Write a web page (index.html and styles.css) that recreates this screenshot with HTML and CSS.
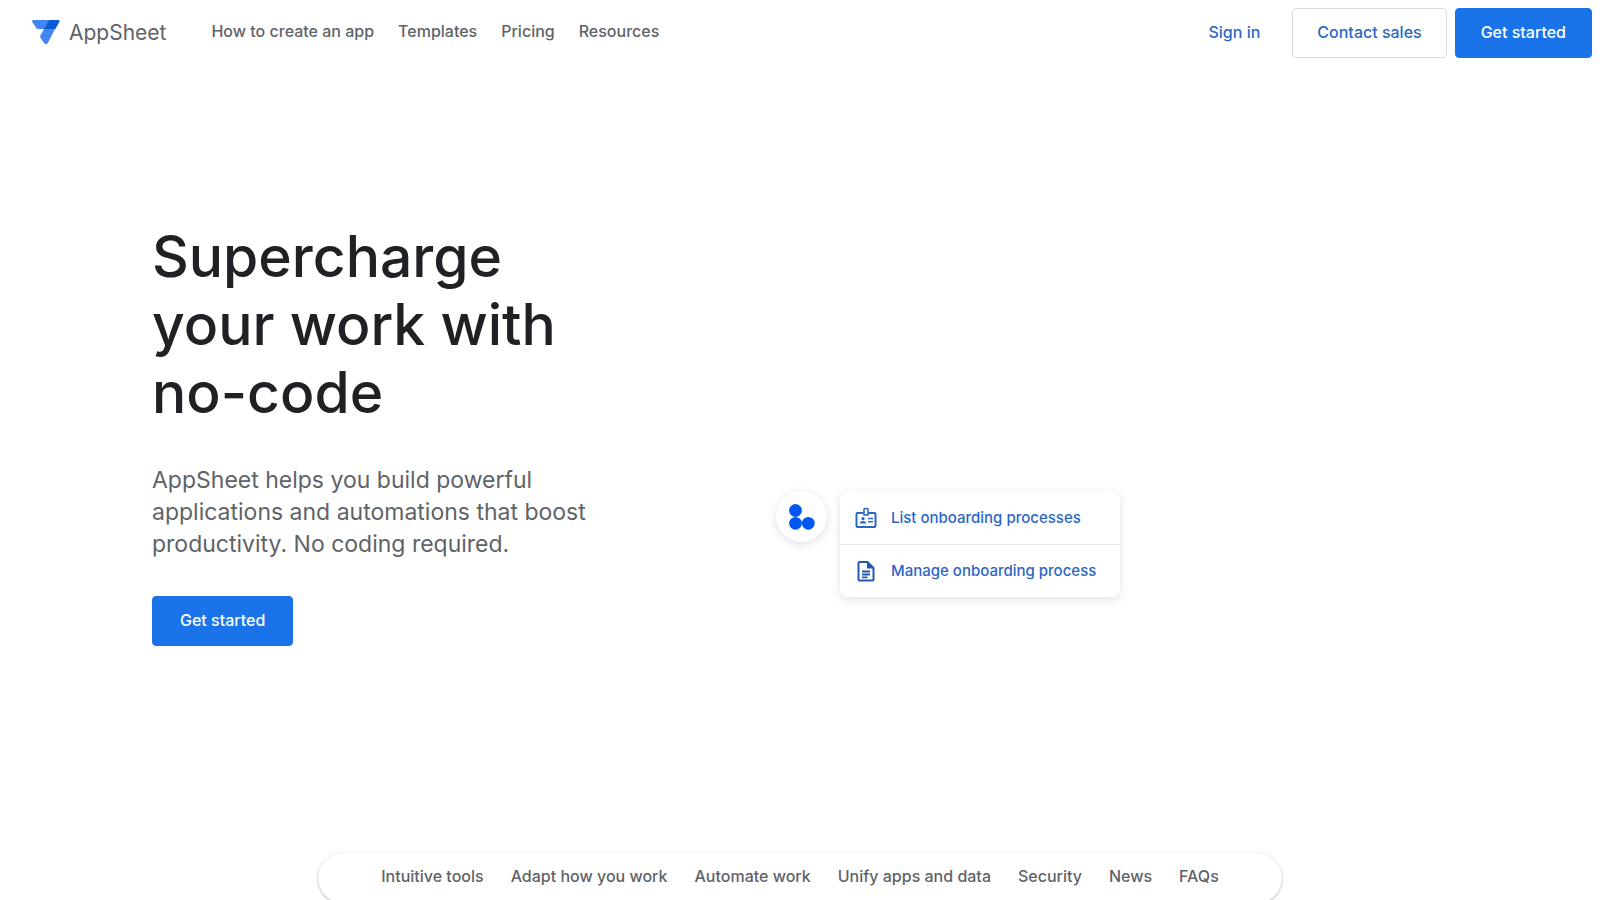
FILE: index.html
```html
<!DOCTYPE html>
<html lang="en">
<head>
<meta charset="utf-8">
<meta name="viewport" content="width=device-width, initial-scale=1">
<title>AppSheet</title>
<link rel="stylesheet" href="styles.css">
</head>
<body>
<div class="page">
<header class="header">
  <a class="brand" href="#">
    <svg class="brand-mark" viewBox="0 0 28 25" aria-hidden="true">
      <path fill="#4285f4" d="M1.500 0H26L23 9L15.700 23.200Q14 25.500 12.200 23.200L8.600 18Q7.800 16.700 8.500 15.300L12 9H6.200Q4.800 9 4 7.800L.3 2Q-.5.200 1.500 0Z"/>
      <path fill="#0b5cd0" d="M18.500 0H26.200Q28.300.200 27.300 2L23.400 9H12L16.500 1.200Q17.200 0 18.500 0Z"/>
    </svg>
    <span>AppSheet</span>
  </a>
  <nav class="nav" aria-label="Main">
    <a href="#">How to create an app</a>
    <a href="#">Templates</a>
    <a href="#">Pricing</a>
    <a href="#">Resources</a>
  </nav>
  <div class="actions">
    <a class="signin" href="#">Sign in</a>
    <button class="button button-outline" type="button">Contact sales</button>
    <button class="button" type="button">Get started</button>
  </div>
</header>
<main class="hero">
  <section class="intro">
    <h1 class="title">Supercharge<br>your work with<br>no-code</h1>
    <p class="lead">AppSheet helps you build powerful<br>applications and automations that boost<br>productivity. No coding required.</p>
    <button class="button button-hero" type="button">Get started</button>
  </section>
  <section class="demo" aria-label="App suggestions">
    <div class="avatar">
      <svg width="26" height="26" viewBox="0 0 26 26" fill="#0057f0" aria-hidden="true"><circle cx="6.500" cy="6.500" r="6.400"/><circle cx="6.500" cy="19.300" r="6.400"/><circle cx="19.300" cy="19.300" r="6.400"/></svg>
    </div>
    <ul class="card">
      <li class="card-row">
        <svg width="22" height="22" viewBox="0 0 22 22" fill="none" stroke="#2b67c5" stroke-width="2" aria-hidden="true">
          <path d="M8.500 6H2.500Q1.500 6 1.500 7V19Q1.500 20 2.500 20H19.500Q20.500 20 20.500 19V7Q20.500 6 19.500 6H13.500"/>
          <path stroke-width="1.600" d="M9 8V2.500Q9 1.500 10 1.500H12Q13 1.500 13 2.500V8Z"/>
          <path stroke-width="1.400" d="M13 11.500H18M13 14.700H18"/>
          <circle cx="8" cy="11.700" r="1.600" fill="#2b67c5" stroke="none"/>
          <path fill="#2b67c5" stroke="none" d="M4.700 16.500Q5 14 8 14T11.300 16.500Z"/>
        </svg>
        <span>List onboarding processes</span>
      </li>
      <li class="card-row">
        <svg width="22" height="22" viewBox="0 0 22 22" fill="none" stroke="#2459b0" stroke-width="2" aria-hidden="true">
          <path d="M12.500 2H4.500Q3.500 2 3.500 3V19.500Q3.500 20.500 4.500 20.500H17.500Q18.500 20.500 18.500 19.500V8Z"/>
          <path fill="#2459b0" stroke="none" d="M12 1.500V8.500H19Z"/>
          <path stroke-width="1.800" d="M7 11.500H15M7 14.500H15M7 17.300H12.500"/>
        </svg>
        <span>Manage onboarding process</span>
      </li>
    </ul>
  </section>
</main>
<nav class="jump" aria-label="Page sections">
  <a href="#">Intuitive tools</a>
  <a href="#">Adapt how you work</a>
  <a href="#">Automate work</a>
  <a href="#">Unify apps and data</a>
  <a href="#">Security</a>
  <a href="#">News</a>
  <a href="#">FAQs</a>
</nav>
</div>
</body>
</html>
```
FILE: styles.css
```css
* { box-sizing: border-box; }

body { margin: 0; }

.page {
  display: flex;
  flex-direction: column;
  min-height: 100vh;
  overflow: hidden;
  background: #fff;
  color: #5f6368;
  font-family: Inter, Roboto, sans-serif;
  font-size: 16px;
  line-height: 24px;
}

a { color: inherit; text-decoration: none; }

.header {
  display: flex;
  align-items: center;
  padding: 8px 8px 8px 32px;
}

.brand {
  display: flex;
  align-items: center;
  gap: 9px;
  padding-bottom: 1px;
  font-size: 21px;
}

.brand-mark { width: 28px; height: 25px; }

.nav {
  display: flex;
  gap: 24px;
  margin-left: 45px;
  padding-bottom: 4px;
  font-weight: 500;
}

.actions {
  display: flex;
  align-items: center;
  gap: 8px;
  margin-left: auto;
  font-weight: 500;
}

.signin { padding: 0 24px 2px; color: #2b67c5; }

.button {
  height: 50px;
  padding: 0 25px 2px;
  border: 1px solid #1a73e8;
  border-radius: 4px;
  background: #1a73e8;
  color: #fff;
  font: inherit;
  font-weight: 500;
  white-space: nowrap;
}

.button-outline {
  padding: 0 24px 2px;
  border-color: #dadce0;
  background: #fff;
  color: #2b67c5;
}

.hero {
  display: grid;
  grid-template-columns: 624px 1fr;
  flex: 1;
  width: 100%;
  max-width: 1296px;
  margin: 0 auto;
}

.intro { padding-top: 157px; }

.title {
  margin: 0;
  color: #202124;
  font-size: 57px;
  font-weight: 500;
  line-height: 68px;
}

.lead {
  margin: 37px 0 36px;
  font-size: 23px;
  line-height: 32px;
}

.button-hero { padding: 0 27px 2px; }

.demo {
  display: flex;
  align-items: flex-start;
  gap: 13px;
  padding-top: 425px;
}

.avatar {
  display: grid;
  place-items: center;
  width: 51px;
  height: 51px;
  border-radius: 50%;
  box-shadow: 0 2px 8px rgba(60, 64, 67, .16);
}

.card {
  width: 280px;
  margin: 0;
  padding: 0;
  border-radius: 8px;
  box-shadow: 0 2px 8px rgba(60, 64, 67, .16);
  color: #2b67c5;
  font-size: 15px;
  font-weight: 500;
  list-style: none;
}

.card-row {
  display: flex;
  align-items: center;
  gap: 14px;
  height: 53px;
  padding-left: 15px;
}

.card-row + .card-row { border-top: 1px solid #e4e6e9; }

.jump {
  display: flex;
  justify-content: center;
  align-items: center;
  gap: 27px;
  align-self: center;
  height: 50px;
  margin-bottom: -3px;
  padding: 0 63px 4px;
  border-radius: 25px;
  box-shadow: 0 1px 3px rgba(60, 64, 67, .4);
  font-weight: 500;
}
```
